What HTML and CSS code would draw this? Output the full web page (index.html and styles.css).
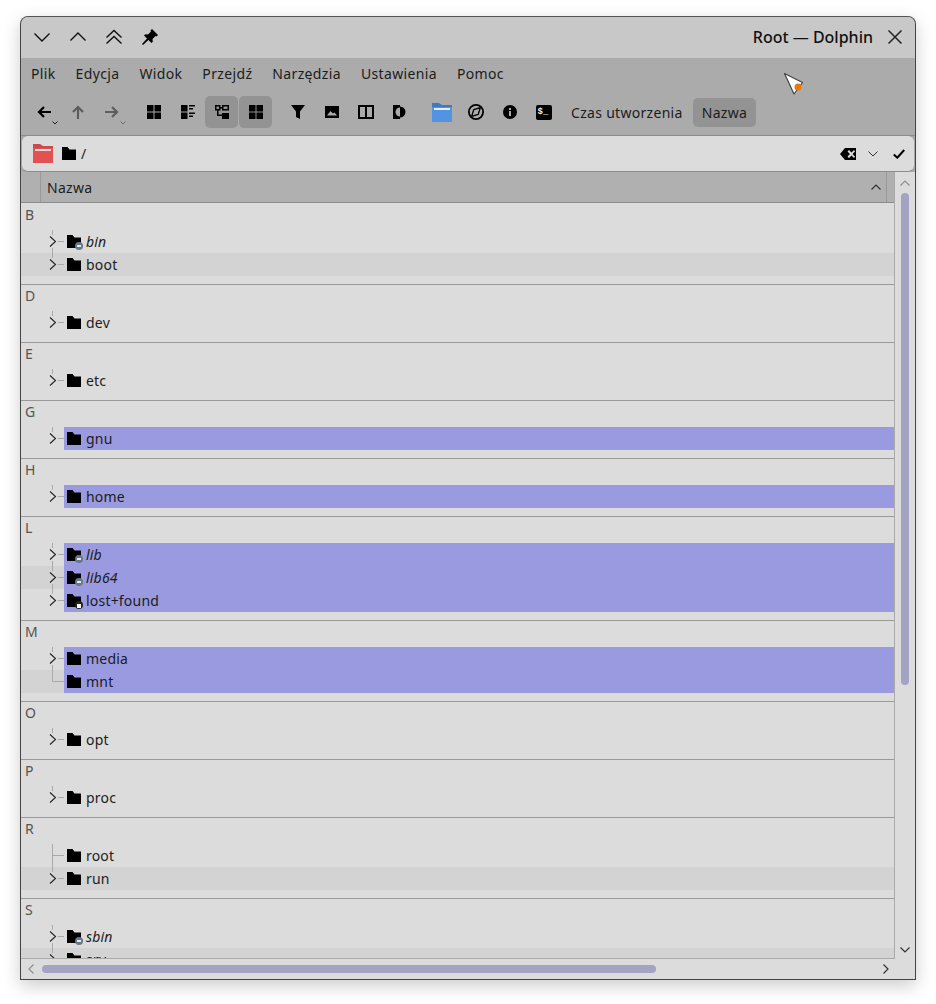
FILE: index.html
```html
<!DOCTYPE html>
<html lang="pl">
<head>
<meta charset="utf-8">
<title>Root — Dolphin</title>
<link rel="stylesheet" href="styles.css">
</head>
<body>
<svg class="defs" width="0" height="0" aria-hidden="true">
  <symbol id="folder" viewBox="0 0 14 13"><path d="M0 0h5.500l2 2.500H14V13H0z"/></symbol>
  <symbol id="exp" viewBox="0 0 43 23">
    <path d="M31.500 0v5M31.500 18v5M37 11.500h6" stroke="#aaa" fill="none"/>
    <path d="M29 6.500l5.500 5-5.500 5" stroke="#222" fill="none" stroke-width="1.100"/>
  </symbol>
  <symbol id="expl" viewBox="0 0 43 23">
    <path d="M31.500 0v5M37 11.500h6" stroke="#aaa" fill="none"/>
    <path d="M29 6.500l5.500 5-5.500 5" stroke="#222" fill="none" stroke-width="1.100"/>
  </symbol>
  <symbol id="branch" viewBox="0 0 43 23"><path d="M31.500 0v23M31.500 11.500h12" stroke="#aaa" fill="none"/></symbol>
  <symbol id="last" viewBox="0 0 43 23"><path d="M31.500 0v11.500h12" stroke="#aaa" fill="none"/></symbol>
  <symbol id="grid" viewBox="0 0 14 14"><path d="M0 0h6.500v6.500H0zM7.500 0H14v6.500H7.500zM0 7.500h6.500V14H0zM7.500 7.500H14V14H7.500z"/></symbol>
</svg>

<div class="window">
  <header class="titlebar">
    <div class="title-btns">
      <svg class="tb" viewBox="0 0 16 16"><path d="M.5 4.500l7.500 7.500 7.500-7.500" /></svg>
      <svg class="tb" viewBox="0 0 16 16"><path d="M.5 11.500l7.500-7.500 7.500 7.500" /></svg>
      <svg class="tb" viewBox="0 0 16 16"><path d="M.5 8.500l7.500-7 7.500 7M.5 14.500l7.500-7 7.500 7" /></svg>
      <svg class="tb filled" viewBox="0 0 16 16"><path d="M10 0l6 6-1.500 1.500-1-.5-3 3 .3 2.700-1.300 1.300L6.400 11 1 16l-1-1 5-5.400L2 6.500l1.300-1.300L6 5.500l3-3-.5-1z"/></svg>
    </div>
    <div class="title-text">Root — Dolphin</div>
    <svg class="close" viewBox="0 0 14 14"><path d="M.5.500l13 13M13.500.500l-13 13"/></svg>
  </header>

  <nav class="menubar">
    <span>Plik</span><span>Edycja</span><span>Widok</span><span>Przejdź</span><span>Narzędzia</span><span>Ustawienia</span><span>Pomoc</span>
  </nav>

  <div class="toolbar">
    <div class="tool"><svg class="ic-14" viewBox="0 0 14 14"><path class="st" d="M14 7H2M7 2L2 7l5 5"/></svg><svg class="drop" viewBox="0 0 6 4"><path d="M.5.500L3 3 5.500.500"/></svg></div>
    <div class="tool"><svg class="ic-14 dim" viewBox="0 0 14 14"><path class="st" d="M7 14V2M2 7l5-5 5 5"/></svg></div>
    <div class="tool"><svg class="ic-14 dim" viewBox="0 0 14 14"><path class="st" d="M0 7h12M7 2l5 5-5 5"/></svg><svg class="drop dim" viewBox="0 0 6 4"><path d="M.5.500L3 3 5.500.500"/></svg></div>
    <div class="tool gap"><svg class="ic-14"><use href="#grid"/></svg></div>
    <div class="tool"><svg class="ic-14" viewBox="0 0 14 14"><path d="M0 0h6.500v6.500H0zM0 7.500h6.500V14H0zM8 0h6v1.500H8zM8 3h4v1.500H8zM8 7.500h6V9H8zM8 10.500h4V12H8z"/></svg></div>
    <div class="tool on"><svg class="ic-14" viewBox="0 0 14 14"><path fill-rule="evenodd" d="M0 0h5.500v5.500H0zM1.500 1.500v2.500h2.500V1.500zM7 0h7v5.500H7zM8.500 1.500v2.500h4V1.500zM7 8h7v6H7zM5.500 2h1.500v1.500H5.500zM2 5.500h1.500v4H7V11H2z"/></svg></div>
    <div class="tool on"><svg class="ic-14"><use href="#grid"/></svg></div>
    <div class="tool gap"><svg class="ic-14" viewBox="0 0 14 14"><path d="M0 0h14L9 6.500V14l-4-2V6.500z"/></svg></div>
    <div class="tool"><svg class="ic-14" viewBox="0 0 14 14"><path fill-rule="evenodd" d="M0 1h14v12H0zM2 10.500h10L9.500 7.500 8 8.500 5.500 6z"/></svg></div>
    <div class="tool"><svg class="ic-16" viewBox="0 0 16 16"><path fill-rule="evenodd" d="M0 1h16v14H0zM2 3v10h5V3zM9 3v10h5V3z"/></svg></div>
    <div class="tool"><svg class="ic-contrast" viewBox="0 0 13 14"><path d="M0 0h7v2.500a4.500 4.500 0 0 0 0 9V14H0z"/><path d="M7 1.500a5.500 5.500 0 0 1 0 11z"/></svg></div>
    <div class="tool gap"><svg class="ic-folder" viewBox="0 0 20 19"><path fill="#3f78c4" d="M0 0h7l3 2h10v5H0z"/><path fill="#5294e2" d="M0 4h20v15H0z"/><path fill="#e8eef8" d="M2 5h16v2H2z"/></svg></div>
    <div class="tool"><svg class="ic-16" viewBox="0 0 16 16"><circle cx="8" cy="8" r="7.100" fill="none" stroke="#000" stroke-width="1.800"/><path d="M12.300 3.700L10.300 10.300 3.700 12.300 5.700 5.700z" fill="none" stroke="#000" stroke-width="1.300" stroke-linejoin="round"/></svg></div>
    <div class="tool"><svg class="ic-14" viewBox="0 0 14 14"><path fill-rule="evenodd" d="M7 0a7 7 0 1 1 0 14A7 7 0 0 1 7 0zM6 3v2h2V3zM6 6v5h2V6z"/></svg></div>
    <div class="tool"><span class="term">$_</span></div>
    <div class="text-tool t-first">Czas utworzenia</div>
    <div class="text-tool on">Nazwa</div>
  </div>

  <div class="address">
    <svg class="addr-folder" viewBox="0 0 20 19"><path fill="#c94b4b" d="M0 0h7l3 2h10v5H0z"/><path fill="#e25252" d="M0 4h20v15H0z"/><path fill="#f3dcdc" d="M2 5h16v2H2z"/></svg>
    <svg class="row-folder"><use href="#folder"/></svg>
    <span class="path">/</span>
    <svg class="clear" viewBox="0 0 16 12"><path fill-rule="evenodd" d="M5 0h11v12H5L0 6zM7.500 3.500L10 6 7.500 8.500 9 10l2.500-2.500L14 10l1-1.500L12.500 6 15 3.500 14 2l-2.500 2.500L9 2z"/></svg>
    <svg class="addr-chev" viewBox="0 0 10 6"><path d="M.5.500L5 5 9.500.500"/></svg>
    <svg class="check" viewBox="0 0 12 10"><path d="M.8 5.500l3.500 3.200L11.200 1"/></svg>
  </div>

  <div class="content">
    <div class="view">
      <div class="colhead">
        <div class="col-stub"></div>
        <div class="col-name"><span>Nazwa</span><svg class="sort" viewBox="0 0 10 6"><path d="M.5 5.500L5 1l4.500 4.500"/></svg></div>
      </div>
      <div class="list">
        <section class="group first">
          <div class="letter">B</div>
          <div class="row"><svg class="guide"><use href="#exp"/></svg><div class="item"><span class="fi"><svg class="row-folder"><use href="#folder"/></svg><i class="badge link"></i></span><em>bin</em></div></div>
          <div class="row alt"><svg class="guide"><use href="#expl"/></svg><div class="item"><span class="fi"><svg class="row-folder"><use href="#folder"/></svg></span>boot</div></div>
        </section>
        <section class="group">
          <div class="letter">D</div>
          <div class="row"><svg class="guide"><use href="#expl"/></svg><div class="item"><span class="fi"><svg class="row-folder"><use href="#folder"/></svg></span>dev</div></div>
        </section>
        <section class="group">
          <div class="letter">E</div>
          <div class="row"><svg class="guide"><use href="#expl"/></svg><div class="item"><span class="fi"><svg class="row-folder"><use href="#folder"/></svg></span>etc</div></div>
        </section>
        <section class="group">
          <div class="letter">G</div>
          <div class="row"><svg class="guide"><use href="#expl"/></svg><div class="item sel"><span class="fi"><svg class="row-folder"><use href="#folder"/></svg></span>gnu</div></div>
        </section>
        <section class="group">
          <div class="letter">H</div>
          <div class="row"><svg class="guide"><use href="#expl"/></svg><div class="item sel"><span class="fi"><svg class="row-folder"><use href="#folder"/></svg></span>home</div></div>
        </section>
        <section class="group">
          <div class="letter">L</div>
          <div class="row"><svg class="guide"><use href="#exp"/></svg><div class="item sel"><span class="fi"><svg class="row-folder"><use href="#folder"/></svg><i class="badge link"></i></span><em>lib</em></div></div>
          <div class="row alt"><svg class="guide"><use href="#exp"/></svg><div class="item sel"><span class="fi"><svg class="row-folder"><use href="#folder"/></svg><i class="badge link"></i></span><em>lib64</em></div></div>
          <div class="row"><svg class="guide"><use href="#expl"/></svg><div class="item sel"><span class="fi"><svg class="row-folder"><use href="#folder"/></svg><i class="badge lock"></i></span>lost+found</div></div>
        </section>
        <section class="group">
          <div class="letter">M</div>
          <div class="row"><svg class="guide"><use href="#exp"/></svg><div class="item sel"><span class="fi"><svg class="row-folder"><use href="#folder"/></svg></span>media</div></div>
          <div class="row alt"><svg class="guide"><use href="#last"/></svg><div class="item sel"><span class="fi"><svg class="row-folder"><use href="#folder"/></svg></span>mnt</div></div>
        </section>
        <section class="group">
          <div class="letter">O</div>
          <div class="row"><svg class="guide"><use href="#expl"/></svg><div class="item"><span class="fi"><svg class="row-folder"><use href="#folder"/></svg></span>opt</div></div>
        </section>
        <section class="group">
          <div class="letter">P</div>
          <div class="row"><svg class="guide"><use href="#expl"/></svg><div class="item"><span class="fi"><svg class="row-folder"><use href="#folder"/></svg></span>proc</div></div>
        </section>
        <section class="group">
          <div class="letter">R</div>
          <div class="row"><svg class="guide"><use href="#branch"/></svg><div class="item"><span class="fi"><svg class="row-folder"><use href="#folder"/></svg></span>root</div></div>
          <div class="row alt"><svg class="guide"><use href="#expl"/></svg><div class="item"><span class="fi"><svg class="row-folder"><use href="#folder"/></svg></span>run</div></div>
        </section>
        <section class="group">
          <div class="letter">S</div>
          <div class="row"><svg class="guide"><use href="#exp"/></svg><div class="item"><span class="fi"><svg class="row-folder"><use href="#folder"/></svg><i class="badge link"></i></span><em>sbin</em></div></div>
          <div class="row alt"><svg class="guide"><use href="#exp"/></svg><div class="item"><span class="fi"><svg class="row-folder"><use href="#folder"/></svg></span>srv</div></div>
        </section>
      </div>
    </div>
    <div class="vscroll">
      <svg class="sb-arrow dim" viewBox="0 0 10 6"><path d="M.5 5.500L5 1l4.500 4.500"/></svg>
      <div class="vtrack"><div class="vthumb"></div></div>
      <svg class="sb-arrow" viewBox="0 0 10 6"><path d="M.5.500L5 5 9.500.500"/></svg>
    </div>
    <div class="hscroll">
      <svg class="sb-arrow-h dim" viewBox="0 0 6 10"><path d="M5.500.500L1 5l4.500 4.500"/></svg>
      <div class="htrack"><div class="hthumb"></div></div>
      <svg class="sb-arrow-h" viewBox="0 0 6 10"><path d="M.5.500L5 5 .5 9.500"/></svg>
    </div>
    <div class="corner"></div>
  </div>

  <svg class="cursor" viewBox="0 0 21 24"><path d="M1.500 1.500L19.500 10.500 11 22z" fill="#fff" stroke="#444" stroke-width="1.200" stroke-linejoin="round"/><circle cx="15" cy="15" r="3.500" fill="#e8780c"/></svg>
</div>
</body>
</html>
```
FILE: styles.css
```css
* { box-sizing: border-box; }
html, body { margin: 0; height: 100%; background: #fff; }
body {
  padding: 16px 20px 24px;
  font-family: "Noto Sans", sans-serif;
  font-size: 14px;
  letter-spacing: .3px;
  color: #1c1c1c;
  overflow: hidden;
}
.defs { position: absolute; }
svg { display: block; flex: none; }

.window {
  position: relative;
  width: 896px;
  height: 964px;
  display: flex;
  flex-direction: column;
  border: 1px solid #444;
  border-top-color: #555;
  border-radius: 8px 8px 0 0;
  background: #a8a8a8;
  box-shadow: 0 6px 18px rgba(0, 0, 0, .2);
}

/* title bar */
.titlebar {
  height: 41px;
  flex: none;
  display: flex;
  align-items: center;
  padding: 0 13px 2px 13px;
  background: #c8c8c8;
  border-radius: 7px 7px 0 0;
}
.title-btns { display: flex; gap: 20px; flex: 1; }
.tb { width: 16px; height: 16px; fill: none; stroke: #111; stroke-width: 1.400; }
.tb.filled { fill: #000; stroke: none; }
.title-text { font-size: 16px; font-weight: 500; letter-spacing: 0; color: #111; margin-right: 15px; }
.close { width: 14px; height: 14px; fill: none; stroke: #222; stroke-width: 1.500; }

/* menu */
.menubar {
  height: 31px;
  flex: none;
  display: flex;
  align-items: center;
  background: #ababab;
  letter-spacing: .35px;
}
.menubar span { padding: 0 10px; }

/* toolbar */
.toolbar {
  height: 47px;
  flex: none;
  display: flex;
  align-items: center;
  gap: 1px;
  padding: 0 0 0 6px;
  background: #ababab;
  border-bottom: 1px solid #8c8c8c;
}
.tool {
  position: relative;
  width: 33px;
  height: 32px;
  display: flex;
  align-items: center;
  justify-content: center;
  border-radius: 5px;
}
.tool.gap { margin-left: 8px; }
.on { background: #939393; }
.ic-16 { width: 16px; height: 16px; }
.ic-14 { width: 14px; height: 14px; }
.ic-contrast { width: 13px; height: 14px; }
.ic-folder { width: 20px; height: 19px; }
.st { fill: none; stroke: #000; stroke-width: 2.200; }
.dim { opacity: .45; }
.drop {
  position: absolute;
  right: 2px;
  bottom: 3px;
  width: 6px;
  height: 4px;
  fill: none;
  stroke: #222;
}
.term {
  width: 16px;
  height: 15px;
  padding-left: 2px;
  border-radius: 2px;
  background: #000;
  color: #eee;
  font: bold 9px/14px "Liberation Mono", monospace;
  letter-spacing: 0;
}
.text-tool { padding: 0 9px; height: 29px; line-height: 29px; border-radius: 5px; }
.t-first { margin-left: 1px; }

/* address */
.address {
  height: 36px;
  flex: none;
  display: flex;
  align-items: center;
  margin: 0 1px;
  padding: 0 9px 0 11px;
  background: #dcdcdc;
  border-bottom: 1px solid #8c8c8c;
  border-radius: 6px;
}
.addr-folder { width: 20px; height: 19px; margin-right: 9px; }
.row-folder { width: 14px; height: 13px; }
.path { margin-left: 5px; flex: 1; }
.clear { width: 16px; height: 12px; margin-right: 12px; }
.addr-chev { width: 10px; height: 6px; fill: none; stroke: #333; margin-right: 15px; }
.check { width: 12px; height: 10px; fill: none; stroke: #000; stroke-width: 2; }

/* content */
.content {
  flex: 1;
  min-height: 0;
  display: grid;
  grid-template-columns: 1fr 20px;
  grid-template-rows: 1fr 20px;
  background: #dcdcdc;
}
.view {
  min-height: 0;
  display: flex;
  flex-direction: column;
  border-right: 1px solid #aaa;
  border-bottom: 1px solid #aaa;
}
.colhead {
  height: 31px;
  flex: none;
  display: flex;
  background: #b0b0b0;
  border-bottom: 1px solid #8c8c8c;
}
.col-stub { width: 20px; border-right: 1px solid #999; }
.col-name {
  width: 846px;
  display: flex;
  align-items: center;
  justify-content: space-between;
  padding: 0 5px 0 6px;
  border-right: 1px solid #999;
}
.sort { width: 10px; height: 6px; fill: none; stroke: #333; stroke-width: 1.200; }
.list { flex: 1; min-height: 0; overflow: hidden; background: #dcdcdc; letter-spacing: .2px; }

.group { border-top: 1px solid #999; padding-bottom: 8px; }
.group.first { border-top-color: transparent; }
.letter { height: 26px; line-height: 21px; padding-left: 4px; color: #555; }
.row { height: 23px; display: flex; }
.row.alt { background: #d3d3d3; }
.guide { width: 43px; height: 23px; }
.item {
  flex: 1;
  display: flex;
  align-items: center;
  padding-left: 3px;
  line-height: 23px;
}
.item.sel { background: #9a9ae0; }
.item em { font-style: italic; }
.fi { position: relative; width: 19px; flex: none; }
.badge {
  position: absolute;
  right: 3px;
  bottom: -2px;
  width: 8px;
  height: 8px;
  border-radius: 50%;
  background: #66788a;
}
.badge::after {
  content: "";
  position: absolute;
  left: 2px;
  top: 3px;
  width: 4px;
  height: 2px;
  background: #e8e8e8;
}
.badge.lock { background: #222; }
.badge.lock::after { left: 2px; top: 3px; width: 4px; height: 4px; background: #fff; }

/* scrollbars */
.vscroll {
  display: flex;
  flex-direction: column;
  align-items: center;
  padding: 8px 0 6px;
}
.sb-arrow { width: 10px; height: 6px; fill: none; stroke: #333; stroke-width: 1.200; }
.vtrack { flex: 1; width: 8px; padding-top: 7px; }
.vthumb { height: 492px; width: 8px; border-radius: 4px; background: #a3a3c4; }
.hscroll {
  display: flex;
  align-items: center;
  padding: 0 6px 0 7px;
}
.sb-arrow-h { width: 6px; height: 10px; fill: none; stroke: #333; stroke-width: 1.200; }
.htrack { flex: 1; padding: 0 0 0 8px; }
.hthumb { width: 614px; height: 8px; border-radius: 4px; background: #a3a3c4; }
.cursor { position: absolute; left: 762px; top: 55px; width: 21px; height: 24px; }
```
